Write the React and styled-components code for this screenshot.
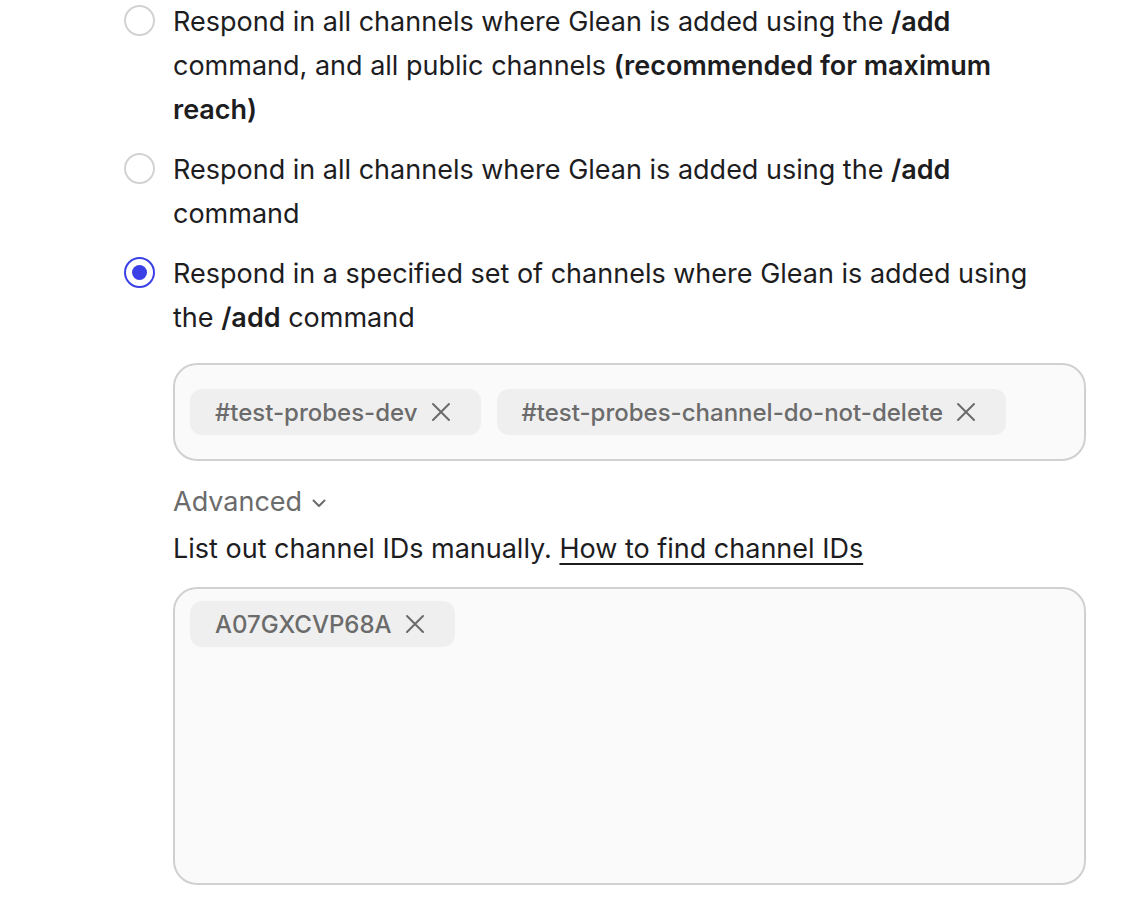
import React, { useState } from "react";
import styled, { createGlobalStyle } from "styled-components";

const GlobalStyle = createGlobalStyle`
  body {
    margin: 0;
    background: #ffffff;
    font-family: Inter, "Noto Sans", "Liberation Sans", sans-serif;
    color: #1d1d1f;
  }
`;

const options = [
  {
    id: "all",
    label: (
      <>
        Respond in all channels where Glean is added using the <b>/add</b>{" "}
        command, and all public channels <b>(recommended for maximum reach)</b>
      </>
    ),
  },
  {
    id: "added",
    label: (
      <>
        Respond in all channels where Glean is added using the <b>/add</b>{" "}
        command
      </>
    ),
  },
  {
    id: "specified",
    label: (
      <>
        Respond in a specified set of channels where Glean is added using the{" "}
        <b>/add</b> command
      </>
    ),
  },
];

const CloseIcon = () => (
  <svg width="22" height="22" viewBox="0 0 22 22" fill="none">
    <path
      d="M3 3L19 19M19 3L3 19"
      stroke="#6b6b6b"
      strokeWidth="2"
      strokeLinecap="round"
    />
  </svg>
);

const Chevron = () => (
  <svg width="16" height="16" viewBox="0 0 16 16" fill="none">
    <path
      d="M2.5 5.5L8 11L13.5 5.5"
      stroke="#6b6b6b"
      strokeWidth="2"
      strokeLinecap="round"
      strokeLinejoin="round"
    />
  </svg>
);

const App = () => {
  const [selected, setSelected] = useState("specified");
  const [channels, setChannels] = useState([
    "#test-probes-dev",
    "#test-probes-channel-do-not-delete",
  ]);
  const [ids, setIds] = useState(["A07GXCVP68A"]);

  return (
    <Page>
      <GlobalStyle />
      <Options>
        {options.map((opt) => (
          <Option key={opt.id} onClick={() => setSelected(opt.id)}>
            <Radio checked={selected === opt.id} />
            <Label>{opt.label}</Label>
          </Option>
        ))}
      </Options>

      <Details>
        <ChipBox>
          {channels.map((c) => (
            <Chip key={c}>
              {c}
              <RemoveButton
                onClick={() => setChannels(channels.filter((x) => x !== c))}
              >
                <CloseIcon />
              </RemoveButton>
            </Chip>
          ))}
        </ChipBox>

        <AdvancedToggle>
          Advanced
          <Chevron />
        </AdvancedToggle>

        <Hint>
          List out channel IDs manually.{" "}
          <HintLink href="#">How to find channel IDs</HintLink>
        </Hint>

        <IdBox>
          {ids.map((id) => (
            <Chip key={id}>
              {id}
              <RemoveButton onClick={() => setIds(ids.filter((x) => x !== id))}>
                <CloseIcon />
              </RemoveButton>
            </Chip>
          ))}
        </IdBox>
      </Details>
    </Page>
  );
};

export default App;

const Page = styled.div`
  width: 1086px;
  padding-left: 124px;
  box-sizing: border-box;
  padding-bottom: 22px;
`;

const Options = styled.div`
  display: flex;
  flex-direction: column;
  gap: 16px;
`;

const Option = styled.div`
  display: flex;
  align-items: flex-start;
  gap: 18px;
  cursor: pointer;
`;

const Radio = styled.span`
  flex: none;
  box-sizing: border-box;
  width: 31px;
  height: 31px;
  margin-top: 5px;
  border-radius: 50%;
  border: 2px solid ${(p) => (p.checked ? "#3a40e6" : "#d2d2d2")};
  background: #fff;
  display: flex;
  align-items: center;
  justify-content: center;
  &::after {
    content: "";
    width: 15px;
    height: 15px;
    border-radius: 50%;
    background: #3a40e6;
    display: ${(p) => (p.checked ? "block" : "none")};
  }
`;

const Label = styled.div`
  font-size: 27px;
  line-height: 44px;
  width: 880px;
  color: #1d1d1f;
  b {
    font-weight: 600;
  }
`;

const Details = styled.div`
  margin-left: 49px;
  margin-top: 23px;
  display: flex;
  flex-direction: column;
`;

const ChipBox = styled.div`
  box-sizing: border-box;
  min-height: 98px;
  border: 2px solid #d0d0d0;
  border-radius: 24px;
  background: #fafafa;
  padding: 0 15px;
  display: flex;
  flex-wrap: wrap;
  align-items: center;
  gap: 16px;
`;

const IdBox = styled(ChipBox)`
  min-height: 298px;
  align-items: flex-start;
  align-content: flex-start;
  padding: 12px 15px;
`;

const Chip = styled.span`
  display: inline-flex;
  align-items: center;
  gap: 12px;
  height: 46px;
  padding: 0 29px 0 25px;
  border-radius: 12px;
  background: #efefef;
  color: #6b6b6b;
  font-size: 24px;
  font-weight: 500;
`;

const RemoveButton = styled.button`
  border: none;
  background: none;
  padding: 0;
  display: flex;
  cursor: pointer;
`;

const AdvancedToggle = styled.button`
  align-self: flex-start;
  margin-top: 25px;
  border: none;
  background: none;
  padding: 0;
  display: flex;
  align-items: center;
  gap: 9px;
  font-family: inherit;
  font-size: 27px;
  line-height: 32px;
  color: #6b6b6b;
  cursor: pointer;
  svg {
    margin-top: 2px;
  }
`;

const Hint = styled.p`
  margin: 15px 0 22px;
  font-size: 27px;
  line-height: 32px;
  color: #1d1d1f;
`;

const HintLink = styled.a`
  color: #1d1d1f;
  text-decoration: underline;
  text-decoration-thickness: 2px;
  text-underline-offset: 5px;
`;
